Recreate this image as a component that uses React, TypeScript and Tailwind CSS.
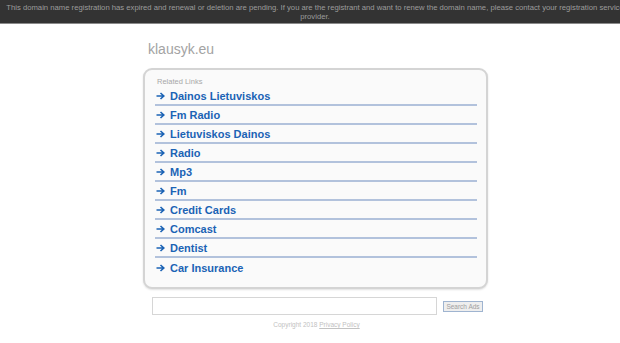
import React from "react";

const links = [
  "Dainos Lietuviskos",
  "Fm Radio",
  "Lietuviskos Dainos",
  "Radio",
  "Mp3",
  "Fm",
  "Credit Cards",
  "Comcast",
  "Dentist",
  "Car Insurance",
];

function Arrow() {
  return (
    <svg className="w-[9px] h-[8px] mr-[5px] shrink-0" viewBox="0 0 9 8" fill="none">
      <path d="M0.5 4H7.5M4.5 1L7.8 4L4.5 7" stroke="#1b63b5" strokeWidth="1.6" />
    </svg>
  );
}

export default function App() {
  return (
    <div className="min-h-[343px] bg-white font-['Liberation_Sans',Arial,sans-serif]">
      <div className="h-[24px] bg-[#333333] border-b border-[#8a8a8a] overflow-hidden">
        <p className="w-[630px] text-center text-[7.7px] leading-[9px] text-[#9c9c9c] pt-[3px]">
          This domain name registration has expired and renewal or deletion are pending. If you are the registrant and want to renew the domain name, please contact your registration service provider.
        </p>
      </div>

      <div className="ml-[143px] w-[345px]">
        <div className="pl-[5px] pt-[17px] text-[14px] leading-[16px] text-[#a3a3a3]">klausyk.eu</div>

        <div className="mt-[11px] rounded-[9px] border-2 border-[#d4d4d4] bg-[#fafafa] shadow-[0_1px_2px_rgba(0,0,0,0.12)] pt-[7px] pb-[10px] pl-[10px] pr-[9px]">
          <div className="pl-[2px] text-[7.5px] leading-[10px] text-[#a8a8a8]">Related Links</div>
          <ul>
            {links.map((l, i) => (
              <li
                key={l}
                className={
                  "flex items-center h-[19px] pl-[1px] " +
                  (i < links.length - 1 ? "border-b-2 border-[#b2c2dc]" : "")
                }
              >
                <Arrow />
                <span className="text-[11px] font-bold text-[#1b63b5] leading-[14px]">{l}</span>
              </li>
            ))}
          </ul>
        </div>

        <div className="flex items-center mt-[8px] ml-[9px]">
          <div className="w-[285px] h-[18px] border border-[#d6d6d6] bg-white" />
          <button className="ml-[6px] h-[11px] w-[40px] border border-[#9fb4d0] bg-[#eeeeee] text-[6.5px] leading-[9px] text-[#a0a0a0]">
            Search Ads
          </button>
        </div>

        <div className="mt-[5px] text-center text-[6.5px] leading-[10px] text-[#c2c2c2] pl-[2px]">
          Copyright 2018 <span className="underline">Privacy Policy</span>
        </div>
      </div>
    </div>
  );
}
